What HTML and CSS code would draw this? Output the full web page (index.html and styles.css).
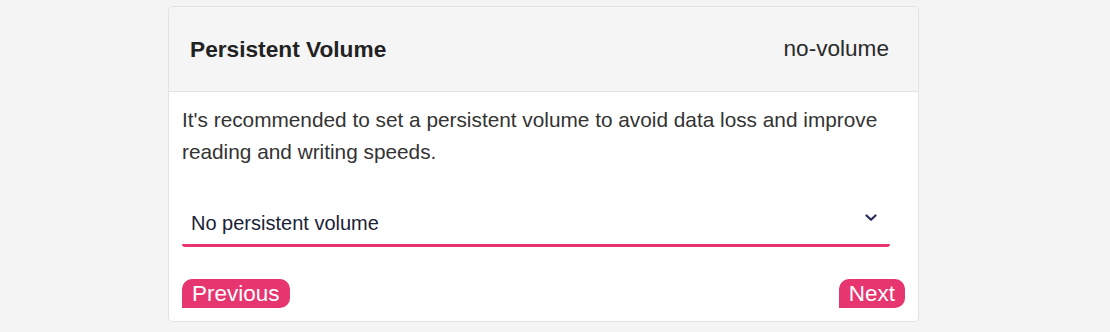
FILE: index.html
```html
<!DOCTYPE html>
<html lang="en">
<head>
<meta charset="utf-8">
<title>Persistent Volume</title>
<link rel="stylesheet" href="styles.css">
</head>
<body>
<div class="card">
  <div class="card-header">
    <span class="title">Persistent Volume</span>
    <span class="value">no-volume</span>
  </div>
  <div class="card-body">
    <p class="desc">It's recommended to set a persistent volume to avoid data loss and improve reading and writing speeds.</p>
    <div class="select">
      <span class="select-text">No persistent volume</span>
      <svg class="chevron" width="12" height="8" viewBox="0 0 12 8"><path d="M1.5 1.5 L6 5.8 L10.5 1.5" fill="none" stroke="#2b2a5c" stroke-width="2.2" stroke-linecap="round" stroke-linejoin="round"/></svg>
    </div>
    <div class="actions">
      <button class="btn">Previous</button>
      <button class="btn">Next</button>
    </div>
  </div>
</div>
</body>
</html>
```
FILE: styles.css
```css
html, body {
  margin: 0;
  padding: 0;
}
body {
  background: #f4f4f4;
  font-family: "Liberation Sans", Arial, sans-serif;
  padding-top: 6px;
}
.card {
  width: 749px;
  margin-left: 168px;
  background: #fff;
  border: 1px solid #e2e2e2;
  border-radius: 5px;
  overflow: hidden;
}
.card-header {
  height: 84px;
  background: #f5f5f5;
  border-bottom: 1px solid #e2e2e2;
  display: flex;
  align-items: center;
  justify-content: space-between;
  padding: 0 29px 0 21px;
}
.title {
  font-weight: bold;
  font-size: 22.7px;
  color: #222;
}
.value {
  font-size: 22.6px;
  color: #2a2a2a;
}
.card-body {
  padding: 12px 13px 13px 13px;
}
.desc {
  margin: 0;
  font-size: 20.8px;
  line-height: 32px;
  color: #333;
}
.select {
  width: 699px;
  height: 44px;
  margin-top: 32px;
  padding-left: 9px;
  border-bottom: 3px solid #e8356f;
  border-radius: 0 0 3px 3px;
  display: flex;
  align-items: center;
  justify-content: space-between;
}
.select-text {
  font-size: 20px;
  color: #1b2238;
  padding-top: 2px;
}
.chevron {
  margin-right: 13px;
  margin-bottom: 8px;
}
.actions {
  margin-top: 32px;
  display: flex;
  justify-content: space-between;
}
.btn {
  font-family: "Liberation Sans", Arial, sans-serif;
  font-size: 22.5px;
  line-height: 29px;
  height: 29px;
  padding: 0 10px;
  border: none;
  border-radius: 10px 10px 10px 0;
  background: #e6356f;
  color: #fff;
}
```
